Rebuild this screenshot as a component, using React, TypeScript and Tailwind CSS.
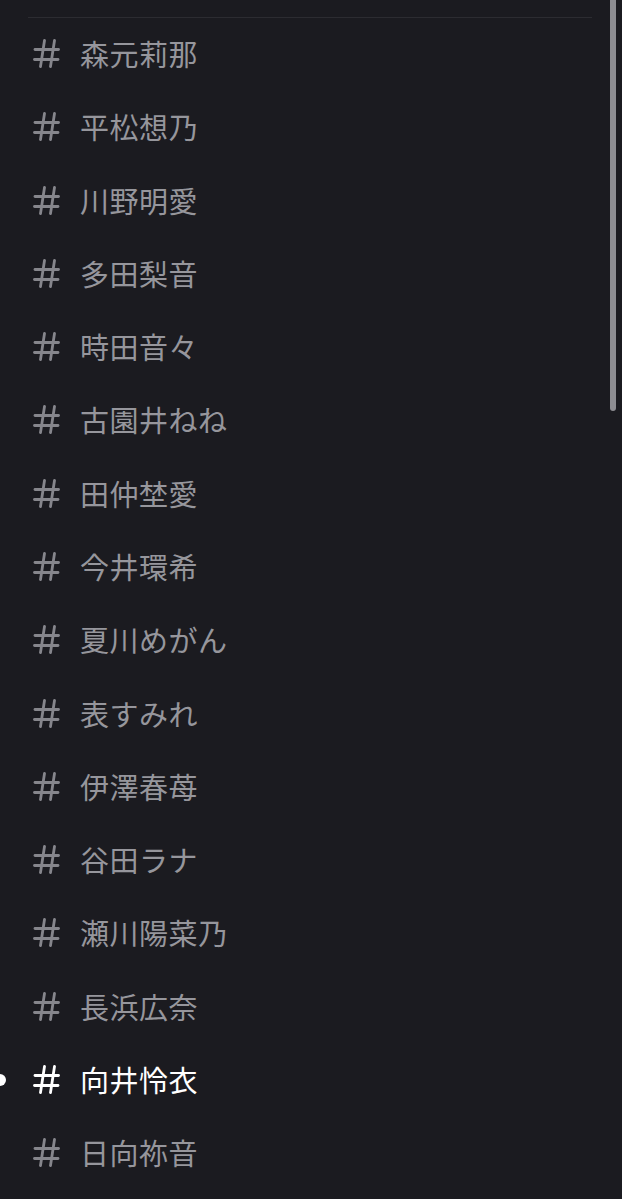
import React from "react";

const channels = [
  "森元莉那",
  "平松想乃",
  "川野明愛",
  "多田梨音",
  "時田音々",
  "古園井ねね",
  "田仲埜愛",
  "今井環希",
  "夏川めがん",
  "表すみれ",
  "伊澤春苺",
  "谷田ラナ",
  "瀬川陽菜乃",
  "長浜広奈",
  "向井怜衣",
  "日向祢音",
];

const ACTIVE = "向井怜衣";

function HashIcon({ className }: { className?: string }) {
  return (
    <svg
      viewBox="0 0 27 29"
      className={className}
      fill="none"
      stroke="currentColor"
      strokeWidth={2.8}
      strokeLinecap="round"
    >
      <line x1="11.5" y1="1.5" x2="7.5" y2="27.5" />
      <line x1="21.5" y1="1.5" x2="17.5" y2="27.5" />
      <line x1="2" y1="10.5" x2="25.5" y2="10.5" />
      <line x1="1.5" y1="20.5" x2="25" y2="20.5" />
    </svg>
  );
}

export default function App() {
  return (
    <div
      className="relative w-[622px] h-[1199px] overflow-hidden bg-[#1b1b20]"
      style={{ fontFamily: '"Noto Sans CJK JP", "Noto Sans", sans-serif' }}
    >
      {/* scroll thumb */}
      <div className="absolute right-[6px] top-[-6px] w-[6px] h-[417px] rounded-full bg-[#8d8d92]" />

      <div className="pt-[17px]">
        <div className="ml-[28px] mr-[30px] h-[1px] bg-[#2c2c31]" />
        <ul>
          {channels.map((name) => {
            const active = name === ACTIVE;
            return (
              <li
                key={name}
                className="relative flex items-center h-[73.27px] pl-[33px]"
              >
                {active && (
                  <span className="absolute left-[-6px] top-1/2 -translate-y-1/2 w-[12px] h-[12px] rounded-full bg-white" />
                )}
                <HashIcon
                  className={`w-[27px] h-[29px] shrink-0 -translate-y-[1px] ${
                    active ? "text-white" : "text-[#86868c]"
                  }`}
                />
                <span
                  className={`ml-[20px] text-[29px] leading-none tracking-[0.5px] -translate-y-[1px] ${
                    active ? "text-white" : "text-[#96969c]"
                  }`}
                >
                  {name}
                </span>
              </li>
            );
          })}
        </ul>
      </div>
    </div>
  );
}
